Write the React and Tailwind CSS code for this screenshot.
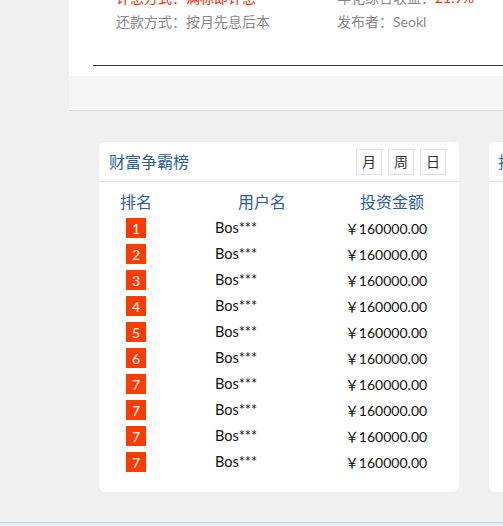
const rows = [1, 2, 3, 4, 5, 6, 7, 7, 7, 7]

function RankCard() {
    return (
        <div className="w-[360px] h-[350px] shrink-0 bg-white rounded-[6px]">
            <div className="h-[40px] flex items-center justify-between pl-[10px] pr-[13px] border-b border-[#e5e5e5]">
                <span className="text-[16px] text-[#2b5d9c]">财富争霸榜</span>
                <div className="flex gap-[6px]">
                    {['月', '周', '日'].map((t) => (
                        <span key={t} className="w-[26px] h-[26px] border border-[#dde1e6] flex items-center justify-center text-[14px] text-[#333]">
                            {t}
                        </span>
                    ))}
                </div>
            </div>
            <div className="mt-[7px] h-[26px] flex items-center text-[16px] text-[#2b5d9c]">
                <span className="w-[74px] text-center">排名</span>
                <span className="w-[178px] text-center">用户名</span>
                <span className="w-[82px] text-center">投资金额</span>
            </div>
            {rows.map((n, i) => (
                <div key={i} className="h-[26px] flex items-center text-[14.5px] text-[#111]">
                    <span className="w-[74px] flex justify-center">
                        <span className="w-[20px] h-[20px] bg-[#ff3c00] text-white text-[14px] flex items-center justify-center">{n}</span>
                    </span>
                    <span className="w-[178px] pl-[42px]">Bos***</span>
                    <span className="w-[82px] flex justify-center pr-[12px] whitespace-nowrap text-[14px]">￥160000.00</span>
                </div>
            ))}
        </div>
    )
}

export default function App() {
    return (
        <div className="w-[503px] h-[526px] overflow-hidden bg-[#f0f0f0]" style={{ fontFamily: 'Lato, "Noto Sans CJK SC", sans-serif' }}>
            <div className="ml-[69px] h-[76px] bg-white overflow-hidden">
                <div className="-mt-[14px] text-[14px] leading-[24px] text-[#888]">
                    <div className="flex">
                        <span className="w-[268px] pl-[47px] text-[#ff2a00]">计息方式：满标即计息</span>
                        <span>年化综合收益：<span className="text-[#ff2a00]">21.9%</span></span>
                    </div>
                    <div className="flex">
                        <span className="w-[268px] pl-[47px]">还款方式：按月先息后本</span>
                        <span>发布者：Seokl</span>
                    </div>
                </div>
                <div className="mt-[31px] ml-[24px] h-px bg-[#333]" />
            </div>
            <div className="ml-[69px] h-[35px] bg-[#f5f5f5] border-b border-[#dcdcdc]" />
            <div className="mt-[31px] pl-[99px] flex gap-[30px]">
                <RankCard />
                <div className="w-[360px] h-[350px] shrink-0 bg-white rounded-[6px]">
                    <div className="h-[40px] flex items-center pl-[9px] border-b border-[#e5e5e5]">
                        <span className="text-[16px] text-[#2b5d9c] whitespace-nowrap">投资排行榜</span>
                    </div>
                </div>
            </div>
            <div className="mt-[30px] h-[4px] border-t border-[#c0ccd8] bg-[#e8edf2]" />
        </div>
    )
}
